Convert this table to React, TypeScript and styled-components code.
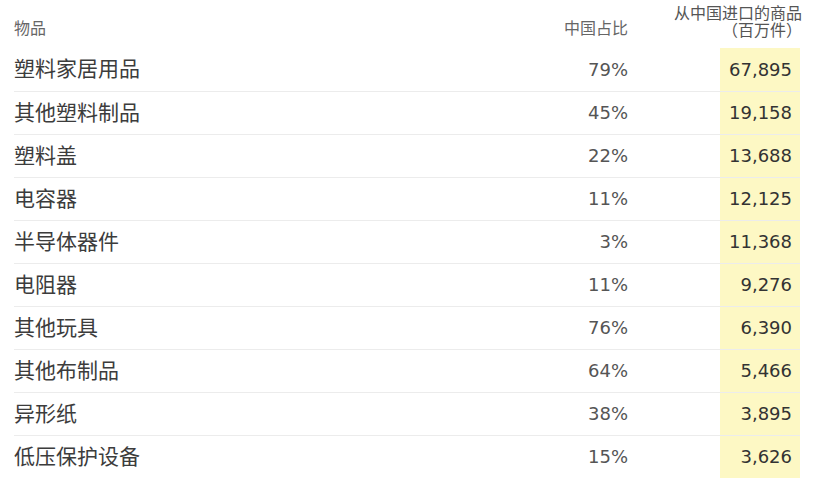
import React from 'react';
import styled, { createGlobalStyle } from 'styled-components';

const GlobalStyle = createGlobalStyle`
  body {
    margin: 0;
    background: #fff;
  }
`;

const Table = styled.table`
  margin: 0 14px;
  width: 786px;
  table-layout: fixed;
  border-collapse: collapse;
  font-family: "DejaVu Sans", "Noto Sans CJK SC", sans-serif;
  color: #333;
`;

const Col = styled.col<{ $width?: number }>`
  width: ${(p) => (p.$width ? `${p.$width}px` : 'auto')};
`;

const HeadRow = styled.tr`
  height: 48px;
`;

const HeadCell = styled.th<{ $align?: 'left' | 'right'; $gap?: number; $bottom?: number }>`
  padding: 0 ${(p) => p.$gap || 0}px ${(p) => p.$bottom ?? 12}px 0;
  vertical-align: bottom;
  text-align: ${(p) => p.$align || 'left'};
  font-family: "Noto Sans CJK SC", sans-serif;
  font-size: 16px;
  font-weight: 400;
  line-height: 17px;
  color: #666;
  white-space: nowrap;
`;

const ImportHead = styled.div`
  display: flex;
  flex-direction: column;
  align-items: flex-end;
  margin-right: -2px;
  color: #555;
`;

const Row = styled.tr<{ $last?: boolean }>`
  height: 43px;
  border-bottom: ${(p) => (p.$last ? 'none' : '1px solid #ececec')};
`;

const ItemCell = styled.td`
  padding: 0 0 4px;
  font-family: "Noto Sans CJK SC", sans-serif;
  font-size: 21px;
  color: #3c3c3c;
`;

const ShareCell = styled.td`
  padding: 0 92px 0 0;
  text-align: right;
  font-size: 18px;
  color: #555;
`;

const ImportCell = styled.td`
  padding: 0 8px 0 0;
  text-align: right;
  background: #fdf8c4;
  font-size: 18px;
  color: #333;
`;

const rows = [
  { item: '塑料家居用品', share: '79%', imports: '67,895' },
  { item: '其他塑料制品', share: '45%', imports: '19,158' },
  { item: '塑料盖', share: '22%', imports: '13,688' },
  { item: '电容器', share: '11%', imports: '12,125' },
  { item: '半导体器件', share: '3%', imports: '11,368' },
  { item: '电阻器', share: '11%', imports: '9,276' },
  { item: '其他玩具', share: '76%', imports: '6,390' },
  { item: '其他布制品', share: '64%', imports: '5,466' },
  { item: '异形纸', share: '38%', imports: '3,895' },
  { item: '低压保护设备', share: '15%', imports: '3,626' },
];

const App = () => (
  <>
    <GlobalStyle />
    <Table>
      <colgroup>
        <Col />
        <Col $width={200} />
        <Col $width={80} />
      </colgroup>
      <thead>
        <HeadRow>
          <HeadCell>物品</HeadCell>
          <HeadCell $align="right" $gap={92}>中国占比</HeadCell>
          <HeadCell $align="right" $bottom={10}>
            <ImportHead>
              <span>从中国进口的商品</span>
              <span>（百万件）</span>
            </ImportHead>
          </HeadCell>
        </HeadRow>
      </thead>
      <tbody>
        {rows.map((r, i) => (
          <Row key={r.item} $last={i === rows.length - 1}>
            <ItemCell>{r.item}</ItemCell>
            <ShareCell>{r.share}</ShareCell>
            <ImportCell>{r.imports}</ImportCell>
          </Row>
        ))}
      </tbody>
    </Table>
  </>
);

export default App;
